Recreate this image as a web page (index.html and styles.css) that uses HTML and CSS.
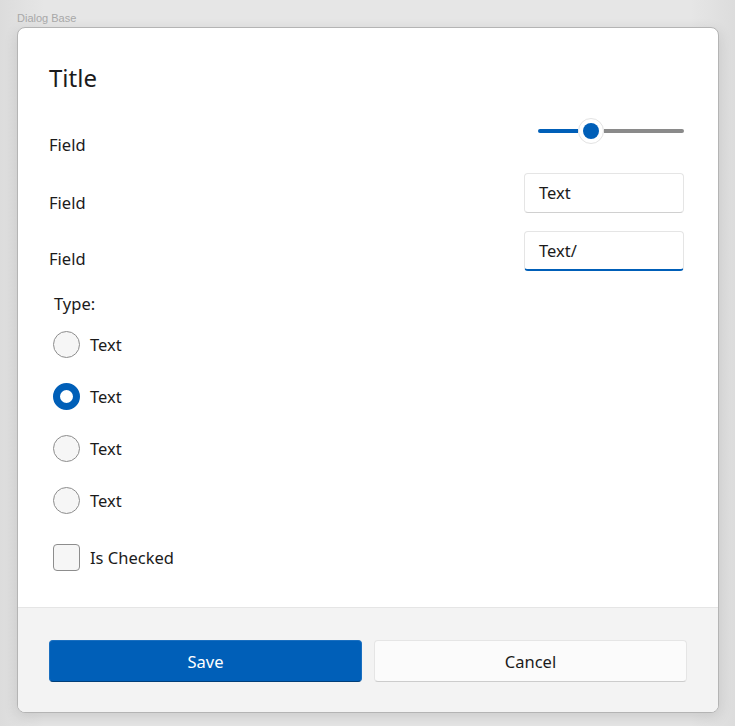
FILE: index.html
```html
<!DOCTYPE html>
<html>
<head>
<meta charset="utf-8">
<link rel="stylesheet" href="styles.css">
</head>
<body>
<div class="caption">Dialog Base</div>
<div class="dialog">
  <div class="content">
    <h1 class="title">Title</h1>
    <div class="rows">
      <div class="row row-slider">
        <span class="label">Field</span>
        <div class="slider">
          <div class="track">
            <div class="fill"></div>
            <div class="thumb"><div class="thumb-dot"></div></div>
            <div class="rest"></div>
          </div>
        </div>
      </div>
      <div class="row">
        <span class="label">Field</span>
        <div class="textbox">Text</div>
      </div>
      <div class="row">
        <span class="label">Field</span>
        <div class="textbox focused">Text/</div>
      </div>
    </div>
    <div class="type-label">Type:</div>
    <div class="radios">
      <div class="radio"><span class="circle"></span><span class="opt">Text</span></div>
      <div class="radio"><span class="circle checked"></span><span class="opt">Text</span></div>
      <div class="radio"><span class="circle"></span><span class="opt">Text</span></div>
      <div class="radio"><span class="circle"></span><span class="opt">Text</span></div>
    </div>
    <div class="checkrow"><span class="box"></span><span class="opt">Is Checked</span></div>
  </div>
  <div class="footer">
    <button class="btn primary">Save</button>
    <button class="btn secondary">Cancel</button>
  </div>
</div>
</body>
</html>
```
FILE: styles.css
```css
* { box-sizing: border-box; }
html, body { margin: 0; padding: 0; }
body {
  width: 735px;
  height: 726px;
  background: linear-gradient(90deg, #dcdcdc 0%, #e6e6e6 6%, #e6e6e6 94%, #dcdcdc 100%);
  font-family: "Noto Sans", "Open Sans", sans-serif;
  color: #1b1b1b;
  overflow: hidden;
}
.caption {
  font-size: 11px;
  line-height: 12px;
  color: #a8a8a8;
  padding: 12px 0 0 17px;
  height: 27px;
  font-family: "Liberation Sans", sans-serif;
}
.dialog {
  margin-left: 17px;
  width: 702px;
  height: 686px;
  background: #ffffff;
  border: 1px solid #b4b4b4;
  border-radius: 8px;
  box-shadow: 0 4px 14px rgba(0,0,0,0.12);
  display: flex;
  flex-direction: column;
  overflow: hidden;
}
.content {
  flex: 1;
  padding: 34px 34px 0 31px;
}
.title {
  margin: 0;
  font-weight: 400;
  font-size: 24px;
  line-height: 32px;
  height: 32px;
}
.rows {
  margin-top: 13px;
  display: flex;
  flex-direction: column;
  gap: 18px;
}
.row {
  display: flex;
  justify-content: space-between;
  align-items: flex-end;
}
.label {
  font-size: 16.5px;
  line-height: 22px;
  margin-bottom: -1px;
}
.row:last-child .label {
  margin-bottom: 1px;
}
.slider {
  height: 48px;
  width: 160px;
  display: flex;
  align-items: center;
  justify-content: flex-end;
}
.track {
  width: 146px;
  height: 26px;
  display: flex;
  align-items: center;
}
.fill {
  width: 40px;
  height: 4px;
  background: #005fb8;
  border-radius: 2px 0 0 2px;
}
.rest {
  flex: 1;
  height: 4px;
  background: #8a8a8a;
  border-radius: 0 2px 2px 0;
}
.thumb {
  width: 26px;
  height: 26px;
  border-radius: 50%;
  background: #ffffff;
  border: 1px solid #e3e3e3;
  display: flex;
  align-items: center;
  justify-content: center;
}
.thumb-dot {
  width: 16px;
  height: 16px;
  border-radius: 50%;
  background: #005fb8;
}
.textbox {
  width: 160px;
  height: 40px;
  border: 1px solid #e5e5e5;
  border-bottom-color: #d0d0d0;
  border-radius: 4px;
  background: #ffffff;
  font-size: 16.5px;
  line-height: 22px;
  padding: 8px 14px;
}
.textbox.focused {
  border-bottom: 2px solid #005fb8;
  padding-bottom: 7px;
}
.type-label {
  margin-top: 22px;
  padding-left: 5px;
  font-size: 16.5px;
  line-height: 22px;
}
.radios {
  margin-top: 16px;
  display: flex;
  flex-direction: column;
  gap: 25px;
  padding-left: 4px;
}
.radio, .checkrow {
  display: flex;
  align-items: center;
  height: 27px;
}
.circle {
  width: 27px;
  height: 27px;
  border-radius: 50%;
  border: 1px solid #8d8d8d;
  background: #f6f6f6;
  flex: none;
}
.circle.checked {
  border: 7.5px solid #005fb8;
  background: #ffffff;
}
.opt {
  margin-left: 10px;
  font-size: 16.5px;
  line-height: 22px;
}
.checkrow {
  margin-top: 30px;
  padding-left: 4px;
}
.box {
  width: 27px;
  height: 27px;
  border-radius: 4px;
  border: 1px solid #8d8d8d;
  background: #f6f6f6;
  flex: none;
}
.footer {
  height: 105px;
  background: #f3f3f3;
  border-top: 1px solid #e5e5e5;
  display: flex;
  gap: 12px;
  padding: 32px 31px 0 31px;
}
.btn {
  flex: 1;
  height: 42px;
  border-radius: 4px;
  font-family: "Noto Sans", "Open Sans", sans-serif;
  font-size: 16.5px;
  cursor: pointer;
}
.btn.primary {
  background: #005fb8;
  color: #ffffff;
  border: 1px solid #1a6fc0;
  border-bottom-color: #003e78;
}
.btn.secondary {
  background: #fbfbfb;
  color: #1b1b1b;
  border: 1px solid #e5e5e5;
  border-bottom-color: #cccccc;
}
```
